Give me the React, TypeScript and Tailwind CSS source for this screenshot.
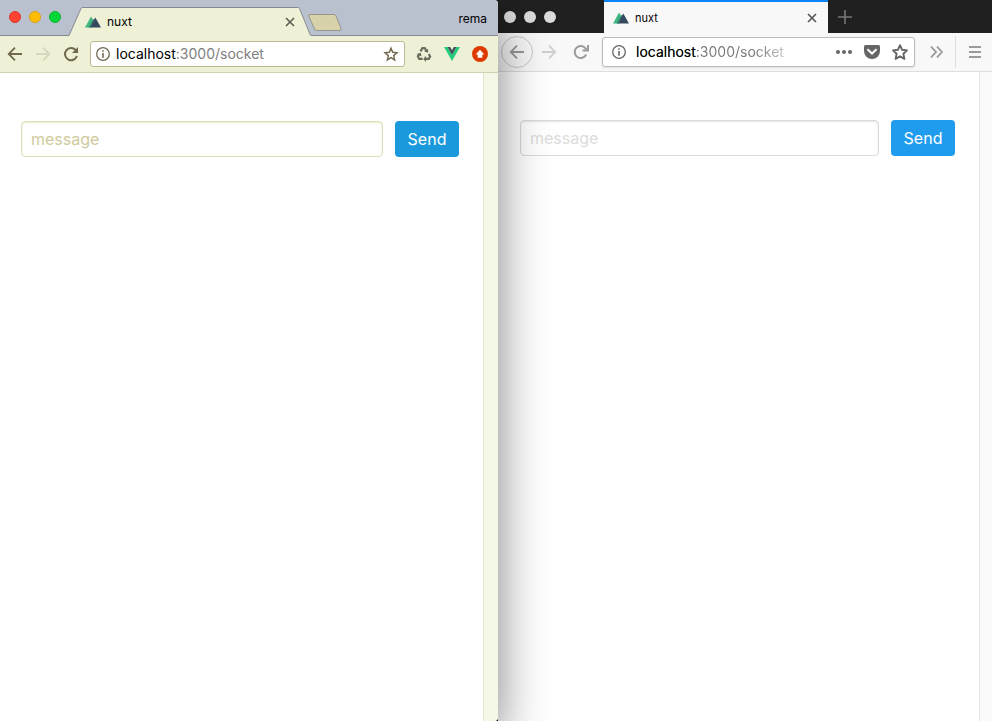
import React from "react";

function NuxtLogo() {
  return (
    <svg width="16" height="12" viewBox="0 0 16 12" aria-hidden="true">
      <path d="M0 11.5 6 .5 9 5.5 6 11.5Z" fill="#41b883" />
      <path d="M4.5 11.5 10.3 1.5 16 11.5Z" fill="#35495e" />
      <path d="M3.5 11.5 8.3 3 9.3 3.4 5.5 11.5Z" fill="#3b8070" />
    </svg>
  );
}

function BackArrow({ flip = false }: { flip?: boolean }) {
  return (
    <svg width="16" height="16" viewBox="0 0 16 16" fill="none" stroke="currentColor" strokeWidth="1.8" aria-hidden="true">
      {flip ? <path d="M1 8H14M8 1.7 14.3 8 8 14.3" /> : <path d="M15 8H2M8 1.7 1.7 8 8 14.3" />}
    </svg>
  );
}

function Reload() {
  return (
    <svg width="16" height="16" viewBox="0 0 16 16" aria-hidden="true">
      <path d="M13.9 10A6.1 6.1 0 1 1 12.6 4" fill="none" stroke="currentColor" strokeWidth="2" />
      <path d="M15 1V7H9Z" fill="currentColor" />
    </svg>
  );
}

function FoxReload() {
  return (
    <svg width="16" height="16" viewBox="0 0 16 16" aria-hidden="true">
      <path d="M13.2 10.5A6 6 0 1 1 12.5 4.4L14 6" fill="none" stroke="currentColor" strokeWidth="2" />
      <path d="M15 1V6.5H9.5" fill="none" stroke="currentColor" strokeWidth="2" />
    </svg>
  );
}

function Info() {
  return (
    <svg width="14" height="14" viewBox="0 0 14 14" aria-hidden="true">
      <circle cx="7" cy="7" r="6.3" fill="none" stroke="currentColor" strokeWidth="1.3" />
      <path d="M6.2 3.2H7.8V4.8H6.2ZM6.2 6H7.8V10.8H6.2Z" fill="currentColor" />
    </svg>
  );
}

function Star({ bold = false }: { bold?: boolean }) {
  return (
    <svg width="16" height="16" viewBox="0 0 16 16" aria-hidden="true">
      <path
        d={
          bold
            ? "M8 1.2 10.1 5.8 15 6.4 11.4 9.8 12.4 14.8 8 12.3 3.6 14.8 4.6 9.8 1 6.4 5.9 5.8Z"
            : "M8 2.2 9.7 6.3 14 6.7 10.7 9.6 11.7 13.9 8 11.6 4.3 13.9 5.3 9.6 2 6.7 6.3 6.3Z"
        }
        fill="none"
        stroke="currentColor"
        strokeWidth={bold ? 1.9 : 1.4}
        strokeLinejoin={bold ? "round" : "miter"}
      />
    </svg>
  );
}

function Cross() {
  return (
    <svg width="10" height="10" viewBox="0 0 10 10" aria-hidden="true">
      <path d="M1 1 9 9M9 1 1 9" stroke="currentColor" strokeWidth="1.6" />
    </svg>
  );
}

function Recycle() {
  return (
    <svg width="16" height="16" viewBox="0 0 16 16" fill="none" stroke="#6a6d5c" strokeWidth="2.2" aria-hidden="true">
      <path d="M4.5 5.4 6.4 2.2H8.8L10.4 5" />
      <path d="M12.8 8 14.1 10.4 12.8 12.9H9.7" />
      <path d="M6.6 12.9H3.2L1.9 10.4 3.1 8.4" />
      <path d="M12.1 2.7V6.8L8.2 5.6ZM10 9.8V16L7.2 13ZM.6 8 4.8 6.8 5.6 10.6Z" fill="#6a6d5c" stroke="none" />
    </svg>
  );
}

function VueLogo() {
  return (
    <svg width="16" height="14" viewBox="0 0 16 14" aria-hidden="true">
      <path d="M0 0H3.5L8 8 12.5 0H16L8 14Z" fill="#22ce7b" />
      <path d="M3.5 0H6.2L8 3.2 9.8 0H12.5L8 8Z" fill="#44505c" />
    </svg>
  );
}

function UpBadge() {
  return (
    <svg width="16" height="16" viewBox="0 0 16 16" aria-hidden="true">
      <circle cx="8" cy="8" r="8" fill="#de3a00" />
      <path d="M8 3.7 12.3 8.4H10.3V11.8H5.7V8.4H3.7Z" fill="#fff" />
    </svg>
  );
}

function Pocket() {
  return (
    <svg width="16" height="14" viewBox="0 0 16 14" aria-hidden="true">
      <path d="M1.5 0H14.5Q16 0 16 1.5V6A8 8 0 0 1 0 6V1.5Q0 0 1.5 0Z" fill="currentColor" />
      <path d="M4 4.7 8 8.5 12 4.7" fill="none" stroke="#fff" strokeWidth="2" strokeLinecap="round" />
    </svg>
  );
}

function ChromeWindow() {
  return (
    <section className="relative z-10 flex flex-col rounded-r-[4px] bg-white shadow-[0_18px_50px_rgba(0,0,0,0.5)]">
      <header className="flex h-9 rounded-tr-[4px] bg-[#b9c0ce]">
        <div className="flex flex-1 items-end border-b border-[#878991]">
          <div className="flex h-9 w-[69px] items-center gap-2 pl-[9px]">
            <button aria-label="Close window" className="size-3 rounded-full border border-[#e0352b] bg-[#ff4332]" />
            <button aria-label="Minimize window" className="size-3 rounded-full border border-[#dba112] bg-[#ffbd05]" />
            <button aria-label="Zoom window" className="size-3 rounded-full border border-[#09b52e] bg-[#04d737]" />
          </div>
          <div className="-mb-px flex h-[29px] w-[242px]">
            <svg width="14" height="29" viewBox="0 0 14 29" aria-hidden="true">
              <path d="M0 29 12 1.5Q12.3.5 14 .5V29Z" fill="#eef1d5" />
              <path d="M0 28.5 12 1.5Q12.3.5 14 .5" fill="none" stroke="#878991" />
            </svg>
            <div className="flex flex-1 items-center border-t border-[#878991] bg-[#eef1d5] pr-[3px] pl-[2px]">
              <NuxtLogo />
              <span className="ml-[6px] flex-1 text-[12px] leading-4 text-black">nuxt</span>
              <button aria-label="Close tab" className="text-[#5b5d50]"><Cross /></button>
            </div>
            <svg width="13" height="29" viewBox="0 0 13 29" aria-hidden="true">
              <path d="M0 .5Q1 .5 1.5 1.5L13 29H0Z" fill="#eef1d5" />
              <path d="M0 .5Q1 .5 1.5 1.5L12.5 28.5" fill="none" stroke="#878991" />
            </svg>
          </div>
          <button aria-label="New tab" className="-ml-[3px] mb-1">
            <svg width="34" height="17" viewBox="0 0 34 17" aria-hidden="true">
              <path d="M2 .5H26Q27 .5 28 2L33 14.5Q33.5 16.5 32 16.5H8.5Q7 16.5 6.5 15L.7 2Q.5 .5 2 .5Z" fill="#d7d2aa" stroke="#94958c" />
            </svg>
          </button>
          <span className="mb-2 ml-auto pr-[11px] text-[12px] leading-4 text-black">rema</span>
        </div>
      </header>
      <nav className="flex h-[37px] items-center border-b border-[#cfd1b3] bg-[#eef1d5] pr-[10px] pl-[7px] text-[#71694f]">
        <button aria-label="Back"><BackArrow /></button>
        <button aria-label="Forward" className="ml-3 text-[#d6d8bd]"><BackArrow flip /></button>
        <button aria-label="Reload" className="ml-3"><Reload /></button>
        <div className="ml-[11px] flex h-[26px] flex-1 items-center rounded-[3px] border border-[#bdb895] bg-white px-[5px]">
          <Info />
          <span className="ml-[6px] flex-1 text-[14px] leading-5 text-[#808080]"><span className="text-black">localhost</span>:3000/socket</span>
          <button aria-label="Bookmark"><Star /></button>
        </div>
        <div className="ml-[11px] flex items-center gap-3">
          <button aria-label="Recycle"><Recycle /></button>
          <button aria-label="Vue devtools"><VueLogo /></button>
          <button aria-label="Update"><UpBadge /></button>
        </div>
      </nav>
      <div className="flex flex-1">
        <form className="flex flex-1 items-start gap-3 pt-12 pr-6 pl-[21px]" onSubmit={(e) => e.preventDefault()}>
          <input aria-label="message" placeholder="message" className="h-9 min-w-0 flex-1 rounded-[4px] border border-[#dedfb6] px-[9px] text-[16px] shadow-[inset_0_1px_2px_#e7eacb] outline-none placeholder:text-[#cfca9b]" />
          <button className="h-9 w-16 rounded-[4px] bg-[#1a99dc] text-[16px] text-white">Send</button>
        </form>
        <div className="w-[15px] rounded-br-[4px] border-l border-[#e4e7cf] bg-[#f5f8e6]" />
      </div>
    </section>
  );
}

function FirefoxWindow() {
  return (
    <section className="flex flex-col bg-white">
      <header className="flex h-[33px] bg-[#202020]">
        <div className="flex w-[106px] items-center gap-2 pl-[6px]">
          <button aria-label="Close window" className="size-3 rounded-full bg-[#dcdcdc]" />
          <button aria-label="Minimize window" className="size-3 rounded-full bg-[#dcdcdc]" />
          <button aria-label="Zoom window" className="size-3 rounded-full bg-[#dcdcdc]" />
        </div>
        <div className="flex w-[224px] items-center border-t-2 border-[#0a84ff] bg-[#f8f8f8] pr-[11px] pl-[9px]">
          <NuxtLogo />
          <span className="ml-[6px] flex-1 text-[11px] leading-4 text-black">nuxt</span>
          <button aria-label="Close tab" className="text-[#555]"><Cross /></button>
        </div>
        <button aria-label="New tab" className="ml-[10px] text-[#777]">
          <svg width="14" height="14" viewBox="0 0 14 14" aria-hidden="true">
            <path d="M7 0V14M0 7H14" stroke="currentColor" strokeWidth="1.6" />
          </svg>
        </button>
      </header>
      <nav className="flex h-[39px] items-center border-b border-[#dedede] bg-[#f8f8f8] text-[#9b9b9b]">
        <button aria-label="Back" className="ml-[3px] flex size-8 items-center justify-center rounded-full border border-[#c9c9c9] text-[#999]"><BackArrow /></button>
        <button aria-label="Forward" className="ml-2 text-[#cfcfcf]"><BackArrow flip /></button>
        <button aria-label="Reload" className="ml-4"><FoxReload /></button>
        <div className="ml-[13px] flex h-[30px] flex-1 items-center rounded-[3px] border border-[#bcbcbc] bg-white pr-[6px] pl-[9px] text-[#666] shadow-[0_1px_2px_rgba(0,0,0,0.1)]">
          <Info />
          <span className="ml-[10px] bg-linear-to-r from-[#777] from-80% to-[#c4c4c4] bg-clip-text text-[14px] leading-5 text-transparent"><span className="text-black">localhost</span>:3000/socket</span>
          <button aria-label="Page actions" className="ml-auto">
            <svg width="16" height="4" viewBox="0 0 16 4" fill="currentColor" aria-hidden="true">
              <circle cx="2" cy="2" r="2" /><circle cx="8" cy="2" r="2" /><circle cx="14" cy="2" r="2" />
            </svg>
          </button>
          <button aria-label="Save to Pocket" className="ml-3"><Pocket /></button>
          <button aria-label="Bookmark" className="ml-3"><Star bold /></button>
        </div>
        <button aria-label="More tools" className="ml-[15px]">
          <svg width="13" height="12" viewBox="0 0 13 12" fill="none" stroke="currentColor" strokeWidth="1.8" aria-hidden="true">
            <path d="M1 .7 6 6 1 11.3M7 .7 12 6 7 11.3" />
          </svg>
        </button>
        <button aria-label="Menu" className="ml-3 h-8 border-l border-[#dedede] pr-[11px] pl-[13px]">
          <svg width="12" height="12" viewBox="0 0 12 12" stroke="currentColor" strokeWidth="2" aria-hidden="true">
            <path d="M0 1H12M0 6H12M0 11H12" />
          </svg>
        </button>
      </nav>
      <div className="flex flex-1">
        <form className="flex flex-1 items-start gap-3 pt-12 pr-6 pl-[22px]" onSubmit={(e) => e.preventDefault()}>
          <input aria-label="message" placeholder="message" className="h-9 min-w-0 flex-1 rounded-[4px] border border-[#dadada] bg-transparent px-[9px] text-[16px] shadow-[inset_0_1px_2px_#e6e6e6] outline-none placeholder:text-[#dcdcdc]" />
          <button className="h-9 w-16 rounded-[4px] bg-[#209cee] text-[16px] text-white">Send</button>
        </form>
        <div className="w-[13px] border-l border-[#e6e6e6] bg-[#fafafa]" />
      </div>
    </section>
  );
}

export default function App() {
  return (
    <main className="grid min-h-screen grid-cols-[498fr_494fr] overflow-hidden bg-[#202020] font-[Inter,Roboto,sans-serif]">
      <ChromeWindow />
      <FirefoxWindow />
    </main>
  );
}
